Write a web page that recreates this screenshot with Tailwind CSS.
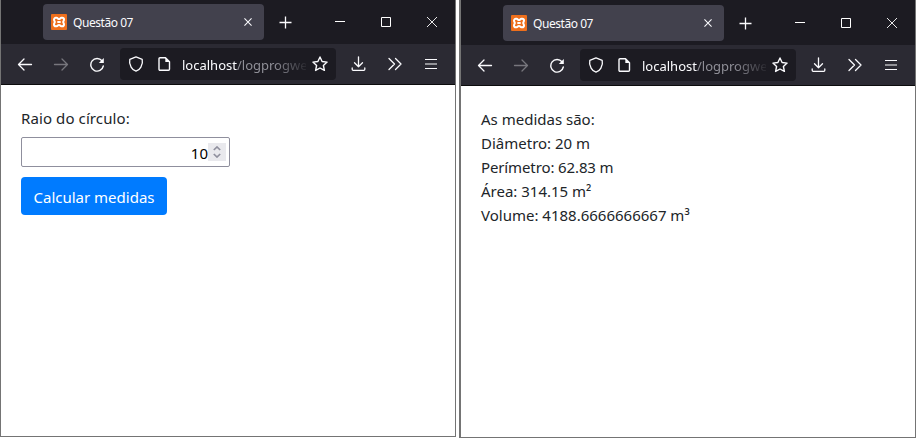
<!DOCTYPE html>
<html lang="pt-BR">
<head>
<meta charset="utf-8">
<title>Questão 07</title>
<script src="https://cdn.jsdelivr.net/npm/@tailwindcss/browser@4"></script>
</head>
<body class="flex h-[444px] w-[922px] items-start overflow-hidden bg-white font-['Noto_Sans','Open_Sans',sans-serif]">

<template id="chrome">
  <div class="flex h-11 shrink-0 items-center bg-[#1c1b22] pl-[42px] text-[#fbfbfe]">
    <div class="flex h-9 w-[221px] items-center rounded bg-[#42414d] pr-[12px] pl-2">
      <svg class="size-4 shrink-0" viewBox="0 0 16 16"><rect width="16" height="16" rx="1" fill="#ee6f1c"/><path d="M4.800 3.800h.8c1.100 0 1.300 1.300 2.400 1.300s1.300-1.300 2.400-1.300h.8c1.100 0 1.800.8 1.800 1.800 0 1.200-.8 1.400-.8 2.400s.8 1.200.8 2.400c0 1-.7 1.800-1.800 1.800h-.8c-1.100 0-1.300-1.300-2.400-1.300s-1.300 1.300-2.400 1.300h-.8c-1.100 0-1.800-.8-1.800-1.800 0-1.200.8-1.400.8-2.400S3 6.800 3 5.600c0-1 .7-1.800 1.800-1.800zM6.300 8h3.400" fill="none" stroke="#fff" stroke-width="2"/></svg>
      <span class="ml-1.5 flex-1 pt-px text-[12px] leading-4 tracking-[-0.45px] whitespace-nowrap">Questão 07</span>
      <svg class="h-2 w-2" viewBox="0 0 9 9" fill="none" stroke="currentColor" stroke-width="1.200"><path d="M.5.5l8 8M8.500.5l-8 8"/></svg>
    </div>
    <svg class="ml-[15px] size-[13px]" viewBox="0 0 13 13" fill="none" stroke="currentColor" stroke-width="1.300"><path d="M6.500.5v12M.5 6.500h12"/></svg>
    <div class="ml-[25px] flex">
      <div class="flex w-[46px] justify-center"><svg class="size-[10px]" viewBox="0 0 10 10" shape-rendering="crispEdges"><path d="M0 4h10v1H0z" fill="#fff"/></svg></div>
      <div class="flex w-[46px] justify-center"><svg class="size-[10px]" viewBox="0 0 10 10" fill="none" stroke="#fff"><path d="M.5.5h9v9h-9z"/></svg></div>
      <div class="flex w-[46px] justify-center"><svg class="size-[10px]" viewBox="0 0 10 10" fill="none" stroke="#fff" stroke-width=".9"><path d="M0 0l10 10M10 0L0 10"/></svg></div>
    </div>
  </div>
  <div class="flex h-[41px] shrink-0 items-center border-b border-[#0c0c0d] bg-[#2b2a33] pl-1.5 text-[#fbfbfe]">
    <div class="flex w-9 justify-center"><svg class="size-4" viewBox="0 0 16 16" fill="none" stroke="currentColor" stroke-width="1.300" stroke-linecap="round" stroke-linejoin="round"><path d="M14.500 8.500h-13M7 3L1.500 8.500 7 14"/></svg></div>
    <div class="flex w-9 justify-center text-[#77767d]"><svg class="size-4" viewBox="0 0 16 16" fill="none" stroke="currentColor" stroke-width="1.300" stroke-linecap="round" stroke-linejoin="round"><path d="M1.500 8.500h13M9 3l5.500 5.500L9 14"/></svg></div>
    <div class="flex w-9 justify-center"><svg class="size-4" viewBox="0 0 16 16" fill="none" stroke="currentColor" stroke-width="1.400" stroke-linecap="round"><path d="M13 4.800A6.300 6.300 0 1 0 14.300 10"/><path d="M14.800 2v5H9.800z" fill="currentColor" stroke="none"/></svg></div>
    <div class="ml-[5px] flex h-8 w-[216px] items-center rounded bg-[#1c1b22] pl-2">
      <svg class="size-4 shrink-0" viewBox="0 0 16 16" fill="none" stroke="currentColor" stroke-width="1.300" stroke-linejoin="round"><path d="M8 .9L14.200 3.300c.5 2-.1 5.600-1.300 7.800-1.100 2-2.900 3.500-4.900 4.100-2-.6-3.800-2.100-4.900-4.100C1.900 8.900 1.300 5.300 1.800 3.300z"/></svg>
      <svg class="ml-3 size-4 shrink-0" viewBox="0 0 16 16" fill="none" stroke="currentColor" stroke-width="1.400" stroke-linejoin="round"><path d="M4 1.800h5.500l4 4v7.400a1 1 0 0 1-1 1H4a1 1 0 0 1-1-1V2.800a1 1 0 0 1 1-1z"/><path d="M9.300 1.600v4.500h4.500z" fill="currentColor" stroke="none"/></svg>
      <div class="ml-[10px] w-[124px] pt-0.5 text-[13px] leading-6 whitespace-nowrap text-[#8f8f97] [mask-image:linear-gradient(to_right,#000_92px,transparent_128px)]"><span class="text-[#fbfbfe]">localhost</span>/logprogwe</div>
      <svg class="ml-1.5 size-4 shrink-0" viewBox="0 0 16 16" fill="none" stroke="currentColor" stroke-width="1.400" stroke-linejoin="round"><path d="M8 1l2.100 4.500 5 .6-3.700 3.400 1 4.900L8 12l-4.400 2.400 1-4.900L.9 6.100l5-.6z"/></svg>
    </div>
    <div class="ml-[5px] flex w-9 justify-center"><svg class="size-4" viewBox="0 0 16 16" fill="none" stroke="currentColor" stroke-width="1.300" stroke-linecap="round" stroke-linejoin="round"><path d="M7.500.8v10M3.500 6.800l4 4 4-4M1.200 12v1.300a1 1 0 0 0 1 1h10.600a1 1 0 0 0 1-1V12"/></svg></div>
    <div class="flex w-9 justify-center"><svg class="size-4" viewBox="0 0 16 16" fill="none" stroke="currentColor" stroke-width="1.300" stroke-linecap="round" stroke-linejoin="round"><path d="M2 2.500L7.500 8 2 13.500M8.500 2.500L14 8l-5.500 5.500"/></svg></div>
    <div class="flex w-9 justify-center"><svg class="size-4" viewBox="0 0 16 16" stroke="currentColor" stroke-width="1.200"><path d="M2 3.500h12M2 8h12M2 12.500h12"/></svg></div>
  </div>
</template>

<section class="flex h-[437px] w-[456px] shrink-0 flex-col border-x border-b border-[#747474]">
  <div data-chrome></div>
  <main class="flex flex-col items-start px-5 pt-[21px] text-[15px] leading-6 text-[#212529]">
    <label for="raio" class="tracking-[0.1px]">Raio do círculo:</label>
    <div class="mt-[7px] flex h-[30px] w-[209px] items-center justify-end rounded-[2px] border border-[#8f8f9d] pr-[3px] text-black">
      <span id="raio" class="pt-0.5">10</span>
      <div class="flex h-[18px] w-[18px] items-center justify-center bg-[#e9e9ed]">
        <svg class="h-3 w-2" viewBox="0 0 8 12" fill="none" stroke="#8f8f9d" stroke-width="1.700"><path d="M.8 4L4 1l3.200 3M.8 8L4 11l3.200-3"/></svg>
      </div>
    </div>
    <button class="mt-[10px] h-[38px] w-[146px] rounded bg-[#007bff] pt-0.5 whitespace-nowrap text-white">Calcular medidas</button>
  </main>
</section>

<section class="ml-[3px] flex h-[438px] w-[457px] shrink-0 flex-col border-r border-b border-l-2 border-[#747474]">
  <div class="h-px shrink-0 bg-[#1c1b22]"></div>
  <div data-chrome></div>
  <main class="px-5 pt-[21px] text-[15px] leading-6 whitespace-nowrap text-[#212529]">
    <p>As medidas são:</p>
    <p>Diâmetro: 20 m</p>
    <p class="tracking-[-0.12px]">Perímetro: 62.83 m</p>
    <p>Área: 314.15 m²</p>
    <p>Volume: 4188.6666666667 m³</p>
  </main>
</section>

<script>
  const chrome = document.getElementById('chrome');
  document.querySelectorAll('[data-chrome]').forEach(slot => slot.replaceWith(chrome.content.cloneNode(true)));
</script>
</body>
</html>
